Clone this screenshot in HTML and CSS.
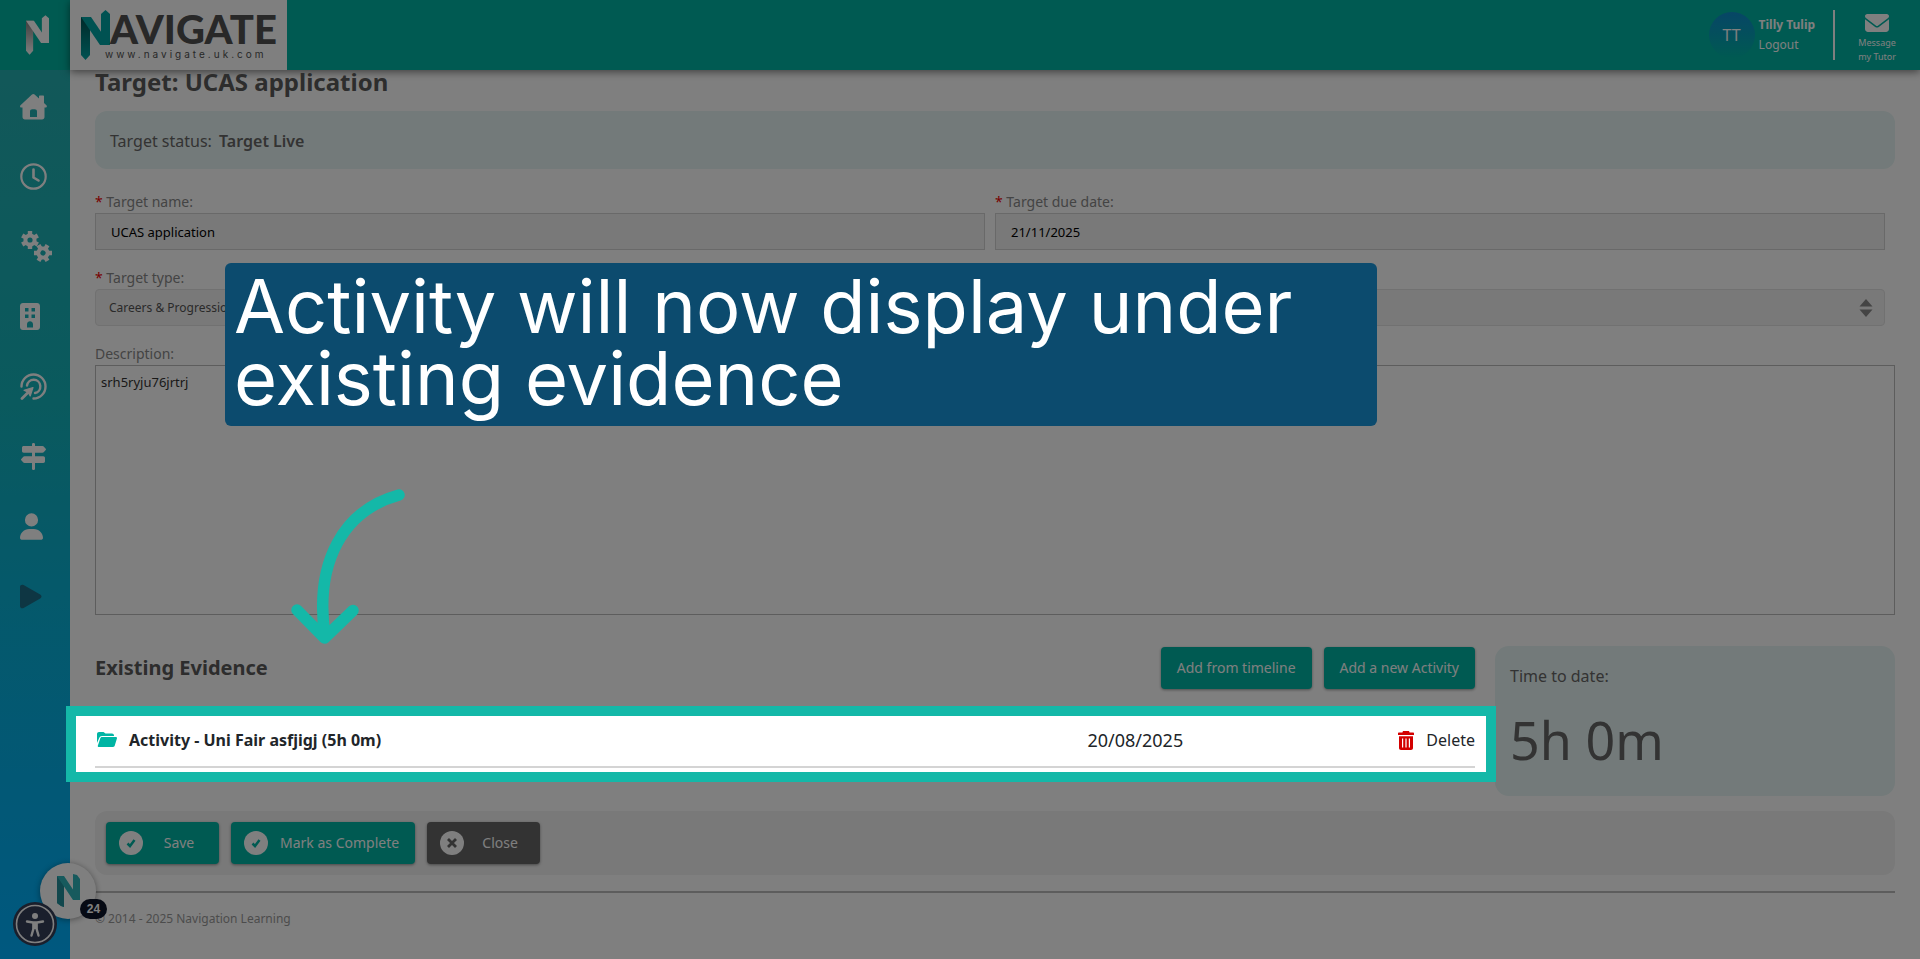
FILE: index.html
```html
<!DOCTYPE html>
<html lang="en">
<head>
<meta charset="utf-8">
<title>Target: UCAS application</title>
<link rel="stylesheet" href="styles.css">
</head>
<body>
<svg class="defs" aria-hidden="true">
  <defs>
    <linearGradient id="fold" x1="0" y1="0" x2="0" y2="1">
      <stop offset="0" stop-color="#000" stop-opacity=".5"/>
      <stop offset="1" stop-color="#000" stop-opacity="0"/>
    </linearGradient>
    <symbol id="ribbon" viewBox="0 0 29 50">
      <path d="M0 7h9v38l-4.500 5L0 45z"/>
      <path d="M0 7h9v38l-4.500 5L0 45z" fill="url(#fold)"/>
      <path d="M20 4l4.500-4L29 4v31h-9z"/>
      <path d="M0 7h10l19 28H19z"/>
    </symbol>
    <symbol id="tick" viewBox="0 0 24 24">
      <circle cx="12" cy="12" r="12" fill="#fff"/>
      <path d="M8.500 12.500l2.500 2.500 4.500-6" fill="none" stroke="#00b5a4" stroke-width="2.500"/>
    </symbol>
  </defs>
</svg>
<div class="app">
  <nav class="sidebar" aria-label="Main">
    <a class="brand-mark" href="#" aria-label="Navigate"><svg width="23" height="40"><use href="#ribbon"/></svg></a>
    <a href="#" aria-label="Home"><svg width="27" height="27" viewBox="0 0 27 27"><path fill-rule="evenodd" d="M12 1.500c.8-.7 1.800-.7 2.600 0L19 5.500V3.500c0-.6.400-1 1-1h3c.6 0 1 .4 1 1V10l2.400 2.200c.9.900.4 2.300-.9 2.300H24.500V24c0 1.500-1 2.500-2.500 2.500H5C3.500 26.500 2.500 25.500 2.500 24v-9.500H1.300C.1 14.500-.4 13 .5 12.200zM10 24h7v-5.500c0-1.400-.9-2.300-2.300-2.300h-2.400c-1.400 0-2.300.9-2.300 2.300z"/></svg></a>
    <a href="#" aria-label="Timeline"><svg class="line" width="27" height="27" viewBox="0 0 27 27" stroke-width="2.200" stroke-linecap="round" stroke-linejoin="round"><circle cx="13.500" cy="13.500" r="12.200"/><path d="M13.500 6.500v8l5 3" stroke-width="2.600"/></svg></a>
    <a href="#" aria-label="Skills"><svg class="line" width="32" height="32" viewBox="0 0 32 32"><g id="gear"><circle cx="10" cy="10" r="4.600" stroke-width="4"/><path stroke-width="4.400" stroke-linejoin="round" d="M10 4.500V1M10 15.500V19M14.800 7.200l3-1.700M5.200 12.800l-3 1.700M14.800 12.800l3 1.700M5.200 7.200l-3-1.700"/></g><use href="#gear" transform="rotate(30 23 23) translate(13 13)"/></svg></a>
    <a href="#" aria-label="Employers"><svg width="20" height="27" viewBox="0 0 20 27"><path fill-rule="evenodd" d="M3 0h14c1.700 0 3 1.300 3 3v21c0 1.700-1.300 3-3 3H3c-1.700 0-3-1.300-3-3V3c0-1.700 1.300-3 3-3zM5 5v3.500h3.500V5zm6.500 0v3.500H15V5zM5 11.500V15h3.500v-3.500zm6.500 0V15H15v-3.500zM7 24.500h6v-3.300c0-3.900-6-3.900-6 0z"/></svg></a>
    <a href="#" aria-label="Targets"><svg class="line" width="27" height="27" viewBox="0 0 27 27" stroke-width="2.400" stroke-linecap="round"><path d="M1.500 13.500a12 12 0 1 1 12 12M7 12.500a6.700 6.700 0 1 1 8 7.500"/><path d="M2 25.500l6.500-6.500" stroke-width="2.800"/><path d="M13 14.500l-2.800 8.500-2-3.800-4.200-2z" fill="#fff" stroke-width="1.200" stroke-linejoin="round"/></svg></a>
    <a href="#" aria-label="Pathways"><svg width="27" height="27" viewBox="0 0 27 27"><path d="M12 1.300c0-1.700 3-1.700 3 0V3h7.500c.5 0 .9.200 1.200.5l2 2.200c.4.400.4.900 0 1.300l-2 2.200c-.3.300-.7.500-1.200.5H15v3.600h8.300c1 0 1.700.7 1.700 1.700v3.200c0 1-.7 1.700-1.700 1.700H15v5.800c0 1.700-3 1.700-3 0V20H4.500c-.5 0-.9-.2-1.200-.5l-2-2.200c-.4-.4-.4-.9 0-1.300l2-2.200c.3-.3.700-.5 1.200-.5H12V9.700H3.700C2.700 9.700 2 9 2 8V4.700C2 3.700 2.700 3 3.700 3H12z"/></svg></a>
    <a href="#" aria-label="Profile"><svg width="23" height="27" viewBox="0 0 448 512"><path d="M224 256A128 128 0 1 0 224 0a128 128 0 1 0 0 256zm-45.700 48C79.800 304 0 383.800 0 482.300C0 498.700 13.300 512 29.700 512H418.300c16.400 0 29.700-13.300 29.700-29.700C448 383.800 368.200 304 269.700 304H178.300z"/></svg></a>
    <a class="play" href="#" aria-label="Play"><svg width="23" height="25" viewBox="0 0 23 25"><path d="M0 3C0 .9 2 .2 3.600 1l16.600 9.600c1.800 1 1.800 2.800 0 3.800L3.600 24C2 24.800 0 24.100 0 22z"/></svg></a>
  </nav>

  <header class="topbar">
    <div class="logo">
      <svg class="logo-n" width="29" height="50"><use href="#ribbon"/></svg>
      <div class="logo-text">
        <span class="logo-name">AVIGATE</span>
        <span class="logo-url">www.navigate.uk.com</span>
      </div>
    </div>
    <div class="account">
      <span class="avatar">TT</span>
      <div class="who"><strong>Tilly Tulip</strong><a href="#">Logout</a></div>
      <a class="message" href="#">
        <svg width="24" height="18" viewBox="0 64 512 384"><path d="M48 64C21.500 64 0 85.500 0 112c0 15.100 7.100 29.300 19.200 38.400L236.800 313.600c11.400 8.500 27 8.500 38.400 0L492.800 150.400c12.100-9.100 19.200-23.300 19.200-38.400c0-26.500-21.500-48-48-48H48zM0 176V384c0 35.300 28.700 64 64 64H448c35.300 0 64-28.700 64-64V176L294.400 339.200c-22.800 17.100-54 17.100-76.800 0L0 176z"/></svg>
        <span>Message<br>my Tutor</span>
      </a>
    </div>
  </header>

  <main class="content">
    <h1>Target: UCAS application</h1>
    <p class="status">Target status: <strong>Target Live</strong></p>

    <form class="form">
      <div class="pair">
        <div class="field">
          <label for="name"><span class="req">*</span> Target name:</label>
          <input id="name" type="text" value="UCAS application">
        </div>
        <div class="field">
          <label for="due"><span class="req">*</span> Target due date:</label>
          <input id="due" type="text" value="21/11/2025">
        </div>
      </div>
      <div class="pair single">
        <div class="field">
          <label for="type"><span class="req">*</span> Target type:</label>
          <div class="select-wrap">
            <select id="type"><option>Careers &amp; Progression</option></select>
            <svg width="14" height="18" viewBox="0 0 14 18"><path d="M7 0l6.500 7.500H.5zM7 18L.5 10.500h13z"/></svg>
          </div>
        </div>
      </div>
      <div class="field">
        <label for="desc">Description:</label>
        <textarea id="desc">srh5ryju76jrtrj</textarea>
      </div>
    </form>

    <div class="evidence">
      <section class="evidence-list">
        <div class="evidence-head">
          <h2>Existing Evidence</h2>
          <button class="btn" type="button">Add from timeline</button>
          <button class="btn" type="button">Add a new Activity</button>
        </div>
        <div class="row">
          <svg width="20" height="16" viewBox="0 0 20 16"><path fill="#00b5a4" d="M0 11V2C0 .9.900 0 2 0h4.500l2 1.500H15c1.100 0 2 .9 2 2v.5H5C3.700 4 2.600 4.800 2.200 6zM5.200 5H19c.7 0 1.200.7 1 1.300l-2.300 7.500c-.2.700-.8 1.200-1.600 1.200H1.800c-.7 0-1.200-.7-1-1.300l2.500-7.500c.3-.7 1-1.200 1.900-1.200z"/></svg>
          <strong class="row-title">Activity - Uni Fair asfjigj (5h 0m)</strong>
          <span class="row-date">20/08/2025</span>
          <button class="delete" type="button"><svg width="16" height="19" viewBox="0 0 16 19"><path fill="#d30000" fill-rule="evenodd" d="M5 0h6l.6 1.500H15c.6 0 1 .4 1 1V4H0V2.500c0-.6.400-1 1-1h3.400zM1 5.200h14V17c0 1.200-.8 2-2 2H3c-1.200 0-2-.8-2-2zM4 7.500V16.500h1.200V7.500zm3.400 0V16.500h1.200V7.500zm3.400 0V16.500H12V7.500z"/></svg>Delete</button>
          <div class="spotlight"></div>
        </div>
      </section>
      <aside class="time">
        <span>Time to date:</span>
        <span class="time-value">5h 0m</span>
      </aside>
    </div>

    <div class="actions">
      <button class="btn" type="button"><svg width="24" height="24"><use href="#tick"/></svg><span>Save</span></button>
      <button class="btn" type="button"><svg width="24" height="24"><use href="#tick"/></svg><span>Mark as Complete</span></button>
      <button class="btn dark" type="button"><svg width="24" height="24" viewBox="0 0 24 24"><circle cx="12" cy="12" r="12" fill="#fff"/><path d="M8 8l8 8M16 8l-8 8" stroke="#666" stroke-width="2.800"/></svg><span>Close</span></button>
    </div>
    <footer>© 2014 - 2025 Navigation Learning</footer>
  </main>
</div>

<button class="bubble" type="button" aria-label="Help centre"><svg width="23" height="34" viewBox="0 0 23 34"><path fill="#2fa9b3" d="M0 2h7v31l-3-1-4-3z"/><path fill="#238f9b" d="M7 12v21l-3-1-4-3V2z"/><path fill="#2fb5bb" d="M16 0l4 1 3 4v21h-7zM0 2h7l16 24h-7z"/></svg><span class="badge">24</span></button>
<button class="access" type="button" aria-label="Accessibility"><svg width="44" height="44" viewBox="0 0 44 44"><circle cx="22" cy="22" r="18.500" fill="none" stroke="#fff" stroke-width="1.600"/><circle cx="22" cy="14" r="3" fill="#fff"/><path d="M14 19.500l6 1h4l6-1M20.500 20.500v6l-2 7M23.500 20.500v6l2 7" fill="none" stroke="#fff" stroke-width="2.400" stroke-linecap="round"/><path fill="#fff" d="M19.500 20h5v7h-5z"/></svg></button>

<svg class="arrow" width="70" height="158" viewBox="0 0 70 158" fill="none" stroke="#14b8a8" stroke-width="11.500" stroke-linecap="round" stroke-linejoin="round" aria-hidden="true"><path d="M107 6C52 21 22 72 33 148M5 121l27.500 28L61 121.500"/></svg>
<p class="callout">Activity will now display under existing evidence</p>
</body>
</html>
```

FILE: styles.css
```css
* {
  box-sizing: border-box;
}

body {
  margin: 0;
  background: #fff;
  color: #666;
  font: 16px/24px "Noto Sans", "Open Sans", sans-serif;
}

a {
  color: inherit;
  text-decoration: none;
}

button,
input,
select,
textarea {
  font: inherit;
}

h1,
h2,
p {
  margin: 0;
}

.defs {
  position: absolute;
  width: 0;
  height: 0;
}

.app {
  display: grid;
  grid-template-columns: 70px 1fr;
  grid-template-rows: 70px 1fr;
  min-height: 100vh;
}

/* Sidebar */

.sidebar {
  grid-row: 1 / 3;
  display: flex;
  flex-direction: column;
  background: linear-gradient(#28b0b0, #14b4bc 42%, #0ab2d6 62%, #00b0ff);
}

.sidebar a {
  display: flex;
  align-items: center;
  height: 70px;
  padding-left: 20px;
}

.sidebar a:nth-child(n + 2) {
  padding-top: 2px;
}

.sidebar svg {
  fill: #fff;
}

.sidebar .line {
  fill: none;
  stroke: #fff;
}

.sidebar .brand-mark {
  justify-content: center;
  padding-left: 4px;
  background: #00b4a2;
}

.sidebar .play svg {
  fill: #1c6c86;
}

/* Top bar */

.topbar {
  display: flex;
  justify-content: space-between;
  background: #00b4a4;
  box-shadow: 0 2px 8px rgba(0, 0, 0, 0.5);
}

.logo {
  display: flex;
  align-items: center;
  padding: 0 10px 0 11px;
  background: #fff;
}

.logo-n {
  fill: #00a5a5;
}

.logo-text {
  display: flex;
  flex-direction: column;
  align-items: flex-start;
}

.logo-name {
  color: #505050;
  font: 900 40px/38px Lato, sans-serif;
}

.logo-url {
  margin-left: -5px;
  color: #505050;
  font: 10px/12px Inter, sans-serif;
  letter-spacing: 3px;
}

.account {
  display: flex;
  align-items: center;
  color: #fff;
}

.avatar {
  width: 46px;
  height: 46px;
  margin-right: 4px;
  border-radius: 50%;
  background: linear-gradient(#0e8ccc, #00b4a4);
  font-size: 16px;
  line-height: 46px;
  text-align: center;
}

.who {
  display: flex;
  flex-direction: column;
  font-size: 12px;
  line-height: 20px;
}

.message {
  display: flex;
  flex-direction: column;
  align-items: center;
  gap: 4px;
  height: 50px;
  margin-left: 18px;
  padding: 4px 24px 0 23px;
  border-left: 2px solid #fff;
  font-size: 9px;
  line-height: 14px;
  text-align: center;
}

.message svg {
  flex: none;
  fill: #fff;
}

/* Content */

.content {
  padding: 0 25px;
}

h1 {
  color: #5a5a5a;
  font-size: 24px;
  line-height: 24px;
}

.status {
  margin-top: 17px;
  padding: 18px 15px 16px;
  border-radius: 12px;
  background: #e6f5f4;
}

.status strong {
  margin-left: 3px;
  font-weight: 600;
}

.form {
  display: flex;
  flex-direction: column;
  gap: 15px;
  margin-top: 20px;
}

.pair {
  display: grid;
  grid-template-columns: 1fr 1fr;
  gap: 10px;
  padding-right: 10px;
}

.pair.single {
  grid-template-columns: 1fr;
}

.field {
  display: flex;
  flex-direction: column;
  color: #888;
  font-size: 14px;
}

.field label {
  padding-top: 2px;
  line-height: 22px;
}

.field .req {
  color: #e00;
}

.field input,
.field select {
  width: 100%;
  height: 37px;
  padding: 0 15px;
  border: 1px solid #d2d2d2;
  background: #f2f2f2;
  color: #000;
  font-size: 13px;
}

.field select {
  appearance: none;
  padding: 0 13px;
  border-color: #e2e2e2;
  border-radius: 4px;
  color: #555;
  font-size: 12px;
}

.select-wrap {
  display: grid;
  align-items: center;
}

.select-wrap > * {
  grid-area: 1 / 1;
}

.select-wrap svg {
  justify-self: end;
  margin-right: 12px;
  fill: #888;
}

.field textarea {
  height: 250px;
  padding: 4px 5px;
  border: 1px solid #bbb;
  background: #fff;
  color: #333;
  font-size: 13px;
  resize: none;
}

/* Evidence */

.evidence {
  display: grid;
  grid-template-columns: 1fr 400px;
  gap: 20px;
  margin-top: 31px;
}

.evidence-head {
  display: flex;
  align-items: center;
  gap: 12px;
  height: 44px;
}

h2 {
  flex: 1;
  color: #5a5a5a;
  font-size: 20px;
}

.btn {
  height: 42px;
  padding: 0 16px;
  border: 0;
  border-radius: 4px;
  background: #00b4a4;
  box-shadow: 0 1px 3px rgba(0, 0, 0, 0.4);
  color: #fff;
  font-size: 14px;
}

.row {
  position: relative;
  display: grid;
  grid-template-columns: 20px 76fr 24fr auto;
  align-items: center;
  gap: 12px;
  margin-top: 27px;
  padding: 11px 0 14px 2px;
  border-bottom: 2px solid #d4d4d4;
  color: #212529;
}

.row-date {
  font-size: 18px;
}

.delete {
  display: flex;
  align-items: center;
  gap: 12px;
  padding: 0;
  border: 0;
  background: none;
  color: #212529;
}

.spotlight {
  position: absolute;
  inset: -11px -21px -16px -29px;
  z-index: 10;
  border: 10px solid #14b8a8;
  box-shadow: 0 0 0 200vmax rgba(0, 0, 0, 0.5);
  pointer-events: none;
}

.time {
  display: flex;
  flex-direction: column;
  gap: 20px;
  height: 150px;
  padding: 18px 15px;
  border-radius: 14px;
  background: #e6f5f4;
}

.time-value {
  font-size: 52px;
  line-height: 64px;
}

.actions {
  display: flex;
  align-items: center;
  gap: 12px;
  margin-top: 15px;
  padding: 11px;
  border-radius: 12px;
  background: #f2f2f2;
}

.actions .btn {
  display: flex;
  align-items: center;
  gap: 12px;
  padding: 0 16px 0 13px;
}

.actions .btn span {
  flex: 1;
  min-width: 48px;
}

.btn.dark {
  background: #666;
}

footer {
  margin-top: 16px;
  padding-top: 14px;
  border-top: 2px solid #bbb;
  color: #999;
  font-size: 12px;
}

/* Floating controls */

.bubble {
  position: fixed;
  bottom: 40px;
  left: 40px;
  width: 56px;
  height: 56px;
  padding: 6px 0 0;
  border: 0;
  border-radius: 50%;
  background: #fff;
  box-shadow: 0 1px 6px rgba(0, 0, 0, 0.4);
}

.badge {
  position: absolute;
  right: -11px;
  bottom: 0;
  width: 27px;
  border-radius: 10px;
  background: #0c1428;
  color: #fff;
  font: bold 12px/20px "Liberation Sans", sans-serif;
}

.access {
  position: fixed;
  bottom: 13px;
  left: 13px;
  width: 44px;
  height: 44px;
  padding: 0;
  border: 0;
  border-radius: 50%;
  background: #343e58;
}

/* Walkthrough annotations */

.arrow {
  position: absolute;
  top: 489px;
  left: 292px;
  z-index: 11;
  overflow: visible;
}

.callout {
  position: absolute;
  top: 263px;
  left: 225px;
  z-index: 11;
  width: 60%;
  padding: 7px 9px 12px;
  border-radius: 6px;
  background: #0c4b6e;
  color: #fff;
  font: 74px/72px Inter, sans-serif;
}
```
